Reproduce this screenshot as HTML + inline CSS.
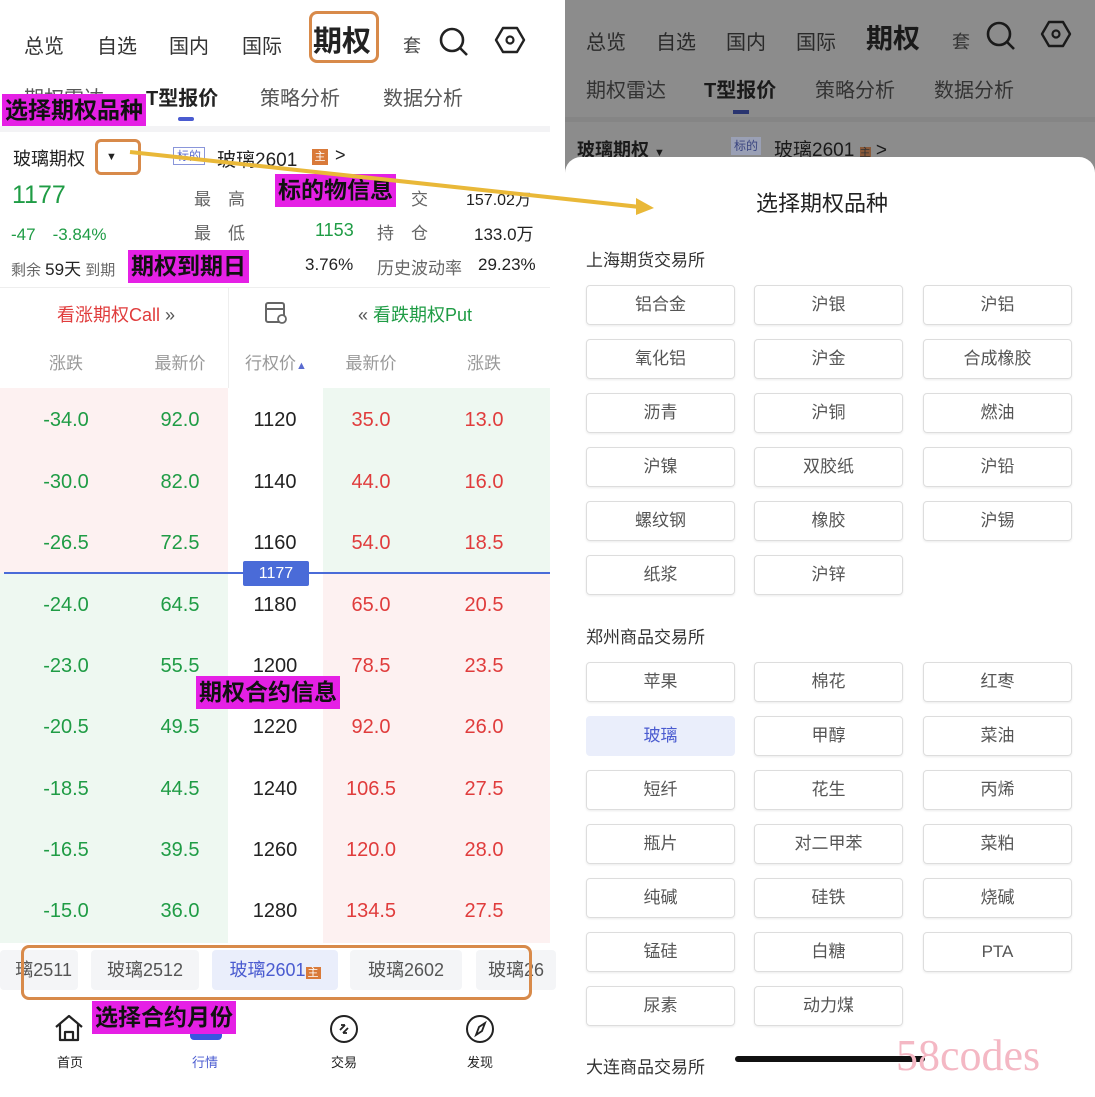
<!DOCTYPE html>
<html><head><meta charset="utf-8"><style>
*{margin:0;padding:0;box-sizing:border-box}
body{width:1095px;height:1084px;position:relative;overflow:hidden;background:#fff;font-family:"Liberation Sans","Noto Sans CJK SC",sans-serif;color:#222}
.a{position:absolute;white-space:nowrap}
.c{transform:translateX(-50%)}
.mg{background:#e520e5;color:#111;font-weight:bold;font-size:23px;padding:0 3px;line-height:33px}
.r{color:#e03c3c}.g{color:#1f9c45}
.btn{position:absolute;width:149px;height:40px;border:1px solid #ddd;border-radius:4px;text-align:center;line-height:38px;font-size:17px;color:#555;box-shadow:0 1px 2px rgba(0,0,0,.08)}
.row{position:absolute;left:0;width:550px;height:61px;font-size:20px}
.row span{position:absolute;top:20px;transform:translateX(-50%)}
</style></head><body>
<!-- LEFT -->
<div class="a" style="left:24px;top:30px;font-size:20px;color:#333">总览</div>
<div class="a" style="left:97px;top:30px;font-size:20px;color:#333">自选</div>
<div class="a" style="left:169px;top:30px;font-size:20px;color:#333">国内</div>
<div class="a" style="left:242px;top:30px;font-size:20px;color:#333">国际</div>
<div class="a" style="left:309px;top:11px;width:70px;height:52px;border:3px solid #d88a4a;border-radius:8px"></div>
<div class="a" style="left:313px;top:18px;font-size:29px;font-weight:bold">期权</div>
<div class="a" style="left:403px;top:32px;font-size:18px;color:#444">套</div>
<svg class="a" style="left:438px;top:26px" width="32" height="32" viewBox="0 0 32 32"><circle cx="14" cy="14" r="11" fill="none" stroke="#222" stroke-width="2.6"/><path d="M22 22l7 7" stroke="#222" stroke-width="2.6"/></svg>
<svg class="a" style="left:494px;top:24px" width="32" height="32" viewBox="0 0 32 32"><path d="M9 4h14l7 12-7 12H9L2 16z" fill="none" stroke="#222" stroke-width="2.4" stroke-linejoin="round"/><circle cx="16" cy="16" r="3.5" fill="none" stroke="#222" stroke-width="2.2"/></svg>
<div class="a" style="left:24px;top:82px;font-size:20px;color:#555">期权雷达</div>
<div class="a" style="left:146px;top:82px;font-size:20px;font-weight:bold">T型报价</div>
<div class="a" style="left:260px;top:82px;font-size:20px;color:#555">策略分析</div>
<div class="a" style="left:383px;top:82px;font-size:20px;color:#555">数据分析</div>
<div class="a" style="left:178px;top:117px;width:16px;height:4px;background:#4a5bd0;border-radius:2px"></div>
<div class="a mg" style="left:2px;top:94px">选择期权品种</div>
<div class="a" style="left:0;top:126px;width:550px;height:6px;background:#f3f3f5"></div>
<div class="a" style="left:13px;top:145px;font-size:18px">玻璃期权</div>
<div class="a" style="left:95px;top:139px;width:46px;height:36px;border:3px solid #d88a4a;border-radius:6px;font-size:11px;padding:9px 0 0 8px">▼</div>
<div class="a" style="left:173px;top:147px;font-size:12px;color:#5a6bd0;border:1px solid #8a96da;padding:0 3px;line-height:16px">标的</div>
<div class="a" style="left:217px;top:145px;font-size:19px">玻璃2601</div>
<div class="a" style="left:312px;top:149px;width:16px;height:16px;background:#d97a3a;color:#fff;font-size:11px;text-align:center;line-height:16px">主</div>
<div class="a" style="left:335px;top:145px;font-size:18px">&gt;</div>
<div class="a g" style="left:12px;top:181px;font-size:25px">1177</div>
<div class="a" style="left:194px;top:185px;font-size:17px;color:#666">最　高</div>
<div class="a mg" style="left:275px;top:174px">标的物信息</div>
<div class="a" style="left:411px;top:185px;font-size:17px;color:#666">交</div>
<div class="a" style="left:466px;top:186px;font-size:16px">157.02万</div>
<div class="a g" style="left:11px;top:220px;font-size:17px">-47　-3.84%</div>
<div class="a" style="left:194px;top:219px;font-size:17px;color:#666">最　低</div>
<div class="a g" style="left:315px;top:220px;font-size:18px">1153</div>
<div class="a" style="left:377px;top:219px;font-size:17px;color:#666">持　仓</div>
<div class="a" style="left:474px;top:220px;font-size:17px">133.0万</div>
<div class="a" style="left:11px;top:255px;font-size:15px;color:#666">剩余 <b style="color:#222;font-size:17px;font-weight:normal">59天</b> 到期</div>
<div class="a mg" style="left:128px;top:250px">期权到期日</div>
<div class="a" style="left:305px;top:255px;font-size:17px">3.76%</div>
<div class="a" style="left:377px;top:254px;font-size:17px;color:#666">历史波动率</div>
<div class="a" style="left:478px;top:255px;font-size:17px">29.23%</div>
<div class="a" style="left:0;top:287px;width:550px;height:1px;background:#eee"></div>
<div class="a" style="left:228px;top:288px;width:1px;height:100px;background:#eee"></div>
<div class="a r" style="left:57px;top:301px;font-size:18px">看涨期权Call <span style="color:#555">»</span></div>
<svg class="a" style="left:263px;top:300px" width="26" height="26"><rect x="3" y="3" width="18" height="19" rx="2" fill="none" stroke="#666" stroke-width="2"/><path d="M3 9h18" stroke="#666" stroke-width="2"/><circle cx="19" cy="19" r="4" fill="#fff" stroke="#666" stroke-width="1.8"/></svg>
<div class="a" style="left:358px;top:301px;font-size:18px"><span style="color:#555">«</span> <span class="g">看跌期权Put</span></div>
<div class="a c" style="left:66px;top:349px;font-size:17px;color:#999">涨跌</div>
<div class="a c" style="left:180px;top:349px;font-size:17px;color:#999">最新价</div>
<div class="a c" style="left:276px;top:349px;font-size:17px;color:#999">行权价<span style="color:#5a6bd0;font-size:11px">▲</span></div>
<div class="a c" style="left:371px;top:349px;font-size:17px;color:#999">最新价</div>
<div class="a c" style="left:484px;top:349px;font-size:17px;color:#999">涨跌</div>
<div class="a" style="left:0;top:388px;width:228px;height:185px;background:#fdf1f1"></div>
<div class="a" style="left:323px;top:388px;width:227px;height:185px;background:#eef8f1"></div>
<div class="a" style="left:0;top:573px;width:228px;height:370px;background:#eef8f1"></div>
<div class="a" style="left:323px;top:573px;width:227px;height:370px;background:#fdf1f1"></div>
<div class="row" style="top:389px"><span class="g" style="left:66px">-34.0</span><span class="g" style="left:180px">92.0</span><span style="left:275px">1120</span><span class="r" style="left:371px">35.0</span><span class="r" style="left:484px">13.0</span></div>
<div class="row" style="top:451px"><span class="g" style="left:66px">-30.0</span><span class="g" style="left:180px">82.0</span><span style="left:275px">1140</span><span class="r" style="left:371px">44.0</span><span class="r" style="left:484px">16.0</span></div>
<div class="row" style="top:512px"><span class="g" style="left:66px">-26.5</span><span class="g" style="left:180px">72.5</span><span style="left:275px">1160</span><span class="r" style="left:371px">54.0</span><span class="r" style="left:484px">18.5</span></div>
<div class="row" style="top:574px"><span class="g" style="left:66px">-24.0</span><span class="g" style="left:180px">64.5</span><span style="left:275px">1180</span><span class="r" style="left:371px">65.0</span><span class="r" style="left:484px">20.5</span></div>
<div class="row" style="top:635px"><span class="g" style="left:66px">-23.0</span><span class="g" style="left:180px">55.5</span><span style="left:275px">1200</span><span class="r" style="left:371px">78.5</span><span class="r" style="left:484px">23.5</span></div>
<div class="row" style="top:696px"><span class="g" style="left:66px">-20.5</span><span class="g" style="left:180px">49.5</span><span style="left:275px">1220</span><span class="r" style="left:371px">92.0</span><span class="r" style="left:484px">26.0</span></div>
<div class="row" style="top:758px"><span class="g" style="left:66px">-18.5</span><span class="g" style="left:180px">44.5</span><span style="left:275px">1240</span><span class="r" style="left:371px">106.5</span><span class="r" style="left:484px">27.5</span></div>
<div class="row" style="top:819px"><span class="g" style="left:66px">-16.5</span><span class="g" style="left:180px">39.5</span><span style="left:275px">1260</span><span class="r" style="left:371px">120.0</span><span class="r" style="left:484px">28.0</span></div>
<div class="row" style="top:880px"><span class="g" style="left:66px">-15.0</span><span class="g" style="left:180px">36.0</span><span style="left:275px">1280</span><span class="r" style="left:371px">134.5</span><span class="r" style="left:484px">27.5</span></div>
<div class="a" style="left:4px;top:572px;width:546px;height:2px;background:#4a6bd8"></div>
<div class="a" style="left:243px;top:561px;width:66px;height:25px;background:#4a6bd8;color:#fff;font-size:16px;text-align:center;line-height:25px;border-radius:2px">1177</div>
<div class="a mg" style="left:196px;top:676px">期权合约信息</div>
<div class="a" style="left:0;top:950px;width:78px;height:40px;background:#f4f5f7;border-radius:4px;font-size:18px;color:#555;line-height:40px;text-align:right;padding-right:6px">璃2511</div>
<div class="a" style="left:91px;top:950px;width:108px;height:40px;background:#f4f5f7;border-radius:4px;font-size:18px;color:#555;line-height:40px;text-align:center">玻璃2512</div>
<div class="a" style="left:212px;top:950px;width:126px;height:40px;background:#eaeefb;border-radius:4px;font-size:18px;color:#4a5bd0;line-height:40px;text-align:center">玻璃2601<span style="background:#d97a3a;color:#fff;font-size:11px;padding:0 2px">主</span></div>
<div class="a" style="left:350px;top:950px;width:112px;height:40px;background:#f4f5f7;border-radius:4px;font-size:18px;color:#555;line-height:40px;text-align:center">玻璃2602</div>
<div class="a" style="left:476px;top:950px;width:80px;height:40px;background:#f4f5f7;border-radius:4px;font-size:18px;color:#555;line-height:40px;padding-left:12px;overflow:hidden">玻璃26</div>
<div class="a" style="left:21px;top:945px;width:511px;height:55px;border:3px solid #d88a4a;border-radius:8px"></div>
<svg class="a" style="left:52px;top:1013px" width="34" height="30"><path d="M4 14L17 3l13 11M8 11v16h18V11M13 27v-8h8v8" fill="none" stroke="#222" stroke-width="2.2" stroke-linejoin="round"/></svg>
<div class="a" style="left:57px;top:1052px;font-size:13px">首页</div>
<div class="a" style="left:190px;top:1030px;width:32px;height:10px;background:#3a56e0;border-radius:0 0 4px 4px"></div>
<div class="a mg" style="left:92px;top:1001px">选择合约月份</div>
<div class="a" style="left:192px;top:1052px;font-size:13px;color:#4a5bd0">行情</div>
<svg class="a" style="left:328px;top:1013px" width="32" height="32"><circle cx="16" cy="16" r="13" fill="none" stroke="#222" stroke-width="2"/><path d="M12 17l5-5M15 20l5-5M13 12h4M15 20h4" stroke="#222" stroke-width="1.8"/></svg>
<div class="a" style="left:331px;top:1052px;font-size:13px">交易</div>
<svg class="a" style="left:464px;top:1013px" width="32" height="32"><circle cx="16" cy="16" r="13" fill="none" stroke="#222" stroke-width="2"/><path d="M21 10l-3 8-6 4 3-8z" fill="none" stroke="#222" stroke-width="1.8"/></svg>
<div class="a" style="left:467px;top:1052px;font-size:13px">发现</div>
<!-- RIGHT -->
<div class="a" style="left:565px;top:0;width:530px;height:200px;background:#8c8c8c"></div>
<div class="a" style="left:586px;top:26px;font-size:20px;color:#2a2a2a">总览</div>
<div class="a" style="left:656px;top:26px;font-size:20px;color:#2a2a2a">自选</div>
<div class="a" style="left:726px;top:26px;font-size:20px;color:#2a2a2a">国内</div>
<div class="a" style="left:796px;top:26px;font-size:20px;color:#2a2a2a">国际</div>
<div class="a" style="left:866px;top:17px;font-size:27px;font-weight:bold;color:#1a1a1a">期权</div>
<div class="a" style="left:952px;top:28px;font-size:18px;color:#333">套</div>
<svg class="a" style="left:985px;top:20px" width="32" height="32" viewBox="0 0 32 32"><circle cx="14" cy="14" r="11" fill="none" stroke="#1a1a1a" stroke-width="2.6"/><path d="M22 22l7 7" stroke="#1a1a1a" stroke-width="2.6"/></svg>
<svg class="a" style="left:1040px;top:18px" width="32" height="32" viewBox="0 0 32 32"><path d="M9 4h14l7 12-7 12H9L2 16z" fill="none" stroke="#1a1a1a" stroke-width="2.4" stroke-linejoin="round"/><circle cx="16" cy="16" r="3.5" fill="none" stroke="#1a1a1a" stroke-width="2.2"/></svg>
<div class="a" style="left:586px;top:74px;font-size:20px;color:#333">期权雷达</div>
<div class="a" style="left:704px;top:74px;font-size:20px;font-weight:bold;color:#1a1a1a">T型报价</div>
<div class="a" style="left:815px;top:74px;font-size:20px;color:#333">策略分析</div>
<div class="a" style="left:934px;top:74px;font-size:20px;color:#333">数据分析</div>
<div class="a" style="left:733px;top:110px;width:16px;height:4px;background:#2a3570"></div>
<div class="a" style="left:565px;top:117px;width:530px;height:5px;background:#858585"></div>
<div class="a" style="left:577px;top:136px;font-size:18px;font-weight:bold;color:#1a1a1a">玻璃期权 <span style="font-size:11px">▼</span></div>
<div class="a" style="left:731px;top:137px;font-size:12px;color:#3a4580;background:#9aa0b5;padding:0 3px;line-height:18px">标的</div>
<div class="a" style="left:774px;top:135px;font-size:19px;color:#1a1a1a">玻璃2601 <span style="background:#8a5a3a;color:#333;font-size:11px">主</span> &gt;</div>
<div class="a" style="left:565px;top:157px;width:530px;height:940px;background:#fff;border-radius:16px 16px 0 0"></div>
<div class="a" style="left:756px;top:186px;font-size:22px;color:#222">选择期权品种</div>
<div class="a" style="left:586px;top:246px;font-size:17px;color:#333">上海期货交易所</div>
<div class="btn" style="left:586px;top:285px">铝合金</div><div class="btn" style="left:754px;top:285px">沪银</div><div class="btn" style="left:923px;top:285px">沪铝</div>
<div class="btn" style="left:586px;top:339px">氧化铝</div><div class="btn" style="left:754px;top:339px">沪金</div><div class="btn" style="left:923px;top:339px">合成橡胶</div>
<div class="btn" style="left:586px;top:393px">沥青</div><div class="btn" style="left:754px;top:393px">沪铜</div><div class="btn" style="left:923px;top:393px">燃油</div>
<div class="btn" style="left:586px;top:447px">沪镍</div><div class="btn" style="left:754px;top:447px">双胶纸</div><div class="btn" style="left:923px;top:447px">沪铅</div>
<div class="btn" style="left:586px;top:501px">螺纹钢</div><div class="btn" style="left:754px;top:501px">橡胶</div><div class="btn" style="left:923px;top:501px">沪锡</div>
<div class="btn" style="left:586px;top:555px">纸浆</div><div class="btn" style="left:754px;top:555px">沪锌</div>
<div class="a" style="left:586px;top:623px;font-size:17px;color:#333">郑州商品交易所</div>
<div class="btn" style="left:586px;top:662px">苹果</div><div class="btn" style="left:754px;top:662px">棉花</div><div class="btn" style="left:923px;top:662px">红枣</div>
<div class="btn" style="left:586px;top:716px;background:#eaeefb;border-color:#eaeefb;color:#4a5bd0;box-shadow:none">玻璃</div><div class="btn" style="left:754px;top:716px">甲醇</div><div class="btn" style="left:923px;top:716px">菜油</div>
<div class="btn" style="left:586px;top:770px">短纤</div><div class="btn" style="left:754px;top:770px">花生</div><div class="btn" style="left:923px;top:770px">丙烯</div>
<div class="btn" style="left:586px;top:824px">瓶片</div><div class="btn" style="left:754px;top:824px">对二甲苯</div><div class="btn" style="left:923px;top:824px">菜粕</div>
<div class="btn" style="left:586px;top:878px">纯碱</div><div class="btn" style="left:754px;top:878px">硅铁</div><div class="btn" style="left:923px;top:878px">烧碱</div>
<div class="btn" style="left:586px;top:932px">锰硅</div><div class="btn" style="left:754px;top:932px">白糖</div><div class="btn" style="left:923px;top:932px">PTA</div>
<div class="btn" style="left:586px;top:986px">尿素</div><div class="btn" style="left:754px;top:986px">动力煤</div>
<div class="a" style="left:586px;top:1053px;font-size:17px;color:#333">大连商品交易所</div>
<div class="a" style="left:735px;top:1056px;width:190px;height:6px;background:#111;border-radius:3px"></div>
<div class="a" style="left:896px;top:1030px;font-family:'Liberation Serif',serif;font-size:44px;color:#f4b8c4">58codes</div>
<svg class="a" style="left:0;top:0;z-index:5" width="700" height="230"><path d="M130 152L640 207" stroke="#e9b838" stroke-width="4"/><path d="M636 198l18 10-18 7z" fill="#e9b838"/></svg>
</body></html>
